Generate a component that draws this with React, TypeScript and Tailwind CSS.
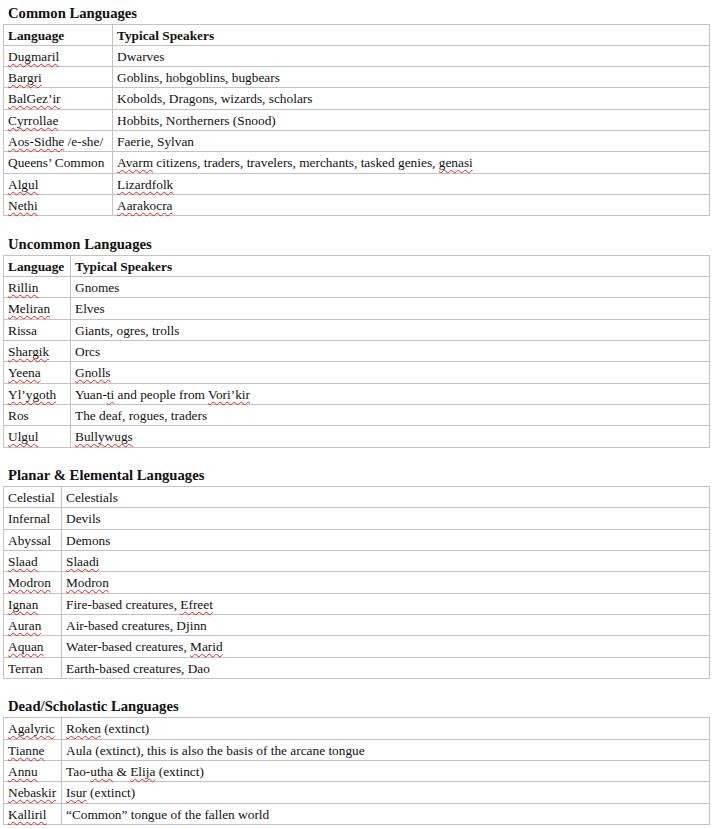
import React from "react";

type Row = [React.ReactNode, React.ReactNode];

// red squiggle for "misspelled" words, like the word processor shows
function Sp({ children }: { children: React.ReactNode }) {
  return (
    <span className="underline decoration-wavy decoration-[#e8231f] decoration-1 underline-offset-[2px] [text-decoration-skip-ink:none]">
      {children}
    </span>
  );
}

function LangTable({
  title,
  firstCol,
  header,
  rows,
}: {
  title: string;
  firstCol: string;
  header?: boolean;
  rows: Row[];
}) {
  return (
    <section>
      <h2 className="mb-[2px] ml-[5px] text-[14.67px] font-bold leading-[17px]">{title}</h2>
      <div className="border-x border-b border-[#c3c3c3]">
        {header && (
          <div className="flex h-[21.33px] border-t border-[#c3c3c3] font-bold">
            <div className={`${firstCol} shrink-0 border-r border-[#c3c3c3] px-[4px] pt-[3px] leading-[15px]`}>
              Language
            </div>
            <div className="px-[4px] pt-[3px] leading-[15px]">Typical Speakers</div>
          </div>
        )}
        {rows.map((r, i) => (
          <div key={i} className="flex h-[21.33px] border-t border-[#c3c3c3]">
            <div
              className={`${firstCol} shrink-0 whitespace-nowrap border-r border-[#c3c3c3] px-[4px] pt-[3px] leading-[15px]`}
            >
              {r[0]}
            </div>
            <div className="whitespace-nowrap px-[4px] pt-[3px] leading-[15px]">{r[1]}</div>
          </div>
        ))}
      </div>
    </section>
  );
}

const common: Row[] = [
  [<Sp>Dugmaril</Sp>, "Dwarves"],
  [<Sp>Bargri</Sp>, "Goblins, hobgoblins, bugbears"],
  [<Sp>BalGez’ir</Sp>, "Kobolds, Dragons, wizards, scholars"],
  [<Sp>Cyrrollae</Sp>, "Hobbits, Northerners (Snood)"],
  [<><Sp>Aos-Sidhe</Sp> /e-she/</>, "Faerie, Sylvan"],
  [
    "Queens’ Common",
    <>
      <Sp>Avarm</Sp> citizens, traders, travelers, merchants, tasked genies, <Sp>genasi</Sp>
    </>,
  ],
  [<Sp>Algul</Sp>, <Sp>Lizardfolk</Sp>],
  [<Sp>Nethi</Sp>, <Sp>Aarakocra</Sp>],
];

const uncommon: Row[] = [
  [<Sp>Rillin</Sp>, "Gnomes"],
  [<Sp>Meliran</Sp>, "Elves"],
  ["Rissa", "Giants, ogres, trolls"],
  [<Sp>Shargik</Sp>, "Orcs"],
  [<Sp>Yeena</Sp>, <Sp>Gnolls</Sp>],
  [
    <Sp>Yl’ygoth</Sp>,
    <>
      Yuan-<Sp>ti</Sp> and people from <Sp>Vori’kir</Sp>
    </>,
  ],
  ["Ros", "The deaf, rogues, traders"],
  [<Sp>Ulgul</Sp>, <Sp>Bullywugs</Sp>],
];

const planar: Row[] = [
  ["Celestial", "Celestials"],
  ["Infernal", "Devils"],
  ["Abyssal", "Demons"],
  [<Sp>Slaad</Sp>, <Sp>Slaadi</Sp>],
  [<Sp>Modron</Sp>, <Sp>Modron</Sp>],
  [<Sp>Ignan</Sp>, <>Fire-based creatures, <Sp>Efreet</Sp></>],
  [<Sp>Auran</Sp>, "Air-based creatures, Djinn"],
  [<Sp>Aquan</Sp>, <>Water-based creatures, <Sp>Marid</Sp></>],
  ["Terran", "Earth-based creatures, Dao"],
];

const dead: Row[] = [
  [<Sp>Agalyric</Sp>, <><Sp>Roken</Sp> (extinct)</>],
  [<Sp>Tianne</Sp>, "Aula (extinct), this is also the basis of the arcane tongue"],
  [<Sp>Annu</Sp>, <>Tao-<Sp>utha</Sp> &amp; <Sp>Elija</Sp> (extinct)</>],
  [<Sp>Nebaskir</Sp>, <><Sp>Isur</Sp> (extinct)</>],
  [<Sp>Kalliril</Sp>, "“Common” tongue of the fallen world"],
];

export default function App() {
  return (
    <div className="min-h-screen bg-white px-[3px] pt-[4.5px] text-[13.33px] text-[#111] [font-family:'Liberation_Serif','Times_New_Roman',serif]">
      <div className="flex flex-col gap-[19.3px]">
        <LangTable title="Common Languages" firstCol="w-[109px]" header rows={common} />
        <LangTable title="Uncommon Languages" firstCol="w-[67px]" header rows={uncommon} />
        <LangTable title="Planar & Elemental Languages" firstCol="w-[58px]" rows={planar} />
        <LangTable title="Dead/Scholastic Languages" firstCol="w-[58px]" rows={dead} />
      </div>
    </div>
  );
}
